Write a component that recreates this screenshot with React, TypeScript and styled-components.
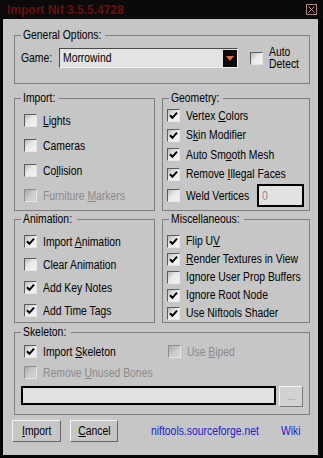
import React from 'react';
import styled, { createGlobalStyle } from 'styled-components';

const uiFont = `"Liberation Sans", Arial, sans-serif`;
// the dialog text is a narrow Arial; no narrow face is installed, so squeeze it
const SQUEEZE = 0.83;

const GlobalStyle = createGlobalStyle`
  html, body {
    margin: 0;
    padding: 0;
    background: #000;
  }
  body {
    width: 323px;
    height: 458px;
    overflow: hidden;
    font-family: ${uiFont};
    font-size: 12.5px;
    color: #000;
  }
`;

const Txt = styled.span<{ $center?: boolean }>`
  display: inline-block;
  white-space: nowrap;
  min-width: 0;
  transform: scaleX(${SQUEEZE});
  transform-origin: ${(p) => (p.$center ? '50% 50%' : '0 50%')};
`;

const Window = styled.div`
  width: 323px;
  height: 458px;
  display: flex;
  flex-direction: column;
  background: #050404;
`;

const TitleBar = styled.div`
  flex: none;
  height: 19px;
  display: flex;
  align-items: center;
  justify-content: space-between;
  padding: 0 6px 0 7px;
  background: #0b0909;
`;

const Title = styled.span`
  font: bold 12px 'Liberation Sans', Arial, sans-serif;
  color: #6c1010;
`;

const CloseBox = styled.div`
  width: 9px;
  height: 9px;
  border: 1px solid #a88585;
  display: flex;
  align-items: center;
  justify-content: center;
`;

const Body = styled.div`
  flex: 1;
  margin: 0 5px 3px 3px;
  padding: 9px 8px 0 11px;
  background: #c6c6c6;
  display: flex;
  flex-direction: column;
`;

const Group = styled.fieldset<{ $mt?: number }>`
  margin: ${(p) => p.$mt ?? 0}px 0 0 0;
  padding: 0;
  min-width: 0;
  border: 1px solid #7e7e7e;
`;

const Legend = styled.legend<{ $w: number }>`
  width: ${(p) => p.$w}px;
  box-sizing: border-box;
  margin-left: 6px;
  padding: 0 0 0 2px;
  line-height: 14px;
  font-size: 12.5px;
  overflow: visible;
  white-space: nowrap;
`;

const Content = styled.div<{ $h: number; $pt: number; $pl: number; $pr?: number }>`
  height: ${(p) => p.$h}px;
  box-sizing: border-box;
  padding: ${(p) => p.$pt}px ${(p) => p.$pr ?? 4}px 0 ${(p) => p.$pl}px;
`;

const Columns = styled.div`
  display: grid;
  grid-template-columns: 141px 148px;
  column-gap: 7px;
`;

const Row = styled.label<{ $h: number; $disabled?: boolean }>`
  height: ${(p) => p.$h}px;
  display: flex;
  align-items: center;
  gap: 6px;
  white-space: nowrap;
  overflow: hidden;
  color: ${(p) => (p.$disabled ? '#8a8a8a' : '#000')};
`;

const Box = styled.span<{ $disabled?: boolean }>`
  flex: none;
  width: 11px;
  height: 11px;
  border-top: 1px solid ${(p) => (p.$disabled ? '#8e8e8e' : '#5c5c5c')};
  border-left: 1px solid ${(p) => (p.$disabled ? '#8e8e8e' : '#5c5c5c')};
  border-bottom: 1px solid #e6e6e6;
  border-right: 1px solid #e6e6e6;
  background: ${(p) =>
    p.$disabled
      ? 'linear-gradient(135deg, #a9a9a9 0%, #cfcfcf 60%)'
      : 'linear-gradient(135deg, #b8b8b8 0%, #e9e9e9 45%, #f4f4f4 100%)'};
  display: flex;
  align-items: center;
  justify-content: center;
`;

const GameRow = styled.div`
  display: flex;
  align-items: center;
  height: 20px;
`;

const GameLabel = styled.span`
  width: 39px;
`;

const Combo = styled.div`
  width: 182px;
  height: 20px;
  box-sizing: border-box;
  border-top: 1px solid #4a4a4a;
  border-left: 1px solid #4a4a4a;
  border-bottom: 1px solid #f2f2f2;
  border-right: 1px solid #f2f2f2;
  background: #e3e3e3;
  display: flex;
  align-items: center;
  justify-content: space-between;
  padding: 0 0 0 3px;
`;

const DropButton = styled.div`
  width: 14px;
  height: 17px;
  background: #0a0a0a;
  display: flex;
  align-items: center;
  justify-content: center;
`;

const AutoDetect = styled.label`
  margin-left: 12px;
  display: flex;
  align-items: center;
  gap: 6px;
  line-height: 12px;
`;

const TwoLines = styled.span`
  display: flex;
  flex-direction: column;
`;

const NumberField = styled.div`
  flex: none;
  width: 47px;
  height: 23px;
  box-sizing: border-box;
  margin-left: auto;
  border: 2px solid #000;
  background: #e2e2e2;
  color: #8a8a8a;
  padding-left: 3px;
  display: flex;
  align-items: center;
`;

const SkeletonTop = styled.div`
  display: flex;
`;

const Cell = styled.div<{ $w?: number }>`
  width: ${(p) => (p.$w ? `${p.$w}px` : 'auto')};
`;

const FileRow = styled.div`
  display: flex;
  align-items: flex-start;
  gap: 3px;
  margin: 3px 0 0 -3px;
`;

const PathField = styled.div`
  width: 255px;
  height: 19px;
  box-sizing: border-box;
  border: 2px solid #000;
  background: #e2e2e2;
`;

const Browse = styled.div`
  width: 24px;
  height: 21px;
  box-sizing: border-box;
  border-top: 1px solid #f2f2f2;
  border-left: 1px solid #f2f2f2;
  border-bottom: 1px solid #7a7a7a;
  border-right: 1px solid #7a7a7a;
  background: #d2d2d2;
  color: #8a8a8a;
  font-size: 10px;
  display: flex;
  align-items: center;
  justify-content: center;
`;

const ButtonRow = styled.div`
  display: flex;
  align-items: center;
  margin: 5px 0 0 -2px;
  height: 22px;
`;

const Button = styled.button<{ $ml?: number }>`
  width: 50px;
  height: 22px;
  margin-left: ${(p) => p.$ml ?? 0}px;
  padding: 0;
  font-family: ${uiFont};
  font-size: 12.5px;
  color: #000;
  background: #c6c6c6;
  border-top: 1px solid #f4f4f4;
  border-left: 1px solid #f4f4f4;
  border-bottom: 1px solid #686868;
  border-right: 1px solid #686868;
`;

const Link = styled.span<{ $ml: string; $mr?: number }>`
  margin-left: ${(p) => p.$ml};
  margin-right: ${(p) => p.$mr ?? 0}px;
  color: #2020c8;
  white-space: nowrap;
`;

type OptionProps = {
  h: number;
  checked?: boolean;
  disabled?: boolean;
  children: React.ReactNode;
};

const Tick = () => (
  <svg width="9" height="9" viewBox="0 0 9 9">
    <path d="M1 4.2 L3.4 6.8 L8 1.6" stroke="#000" strokeWidth="2" fill="none" />
  </svg>
);

const Option = ({ h, checked, disabled, children }: OptionProps) => (
  <Row $h={h} $disabled={disabled}>
    <Box $disabled={disabled}>{checked && <Tick />}</Box>
    <Txt>{children}</Txt>
  </Row>
);

export default function App() {
  return (
    <>
      <GlobalStyle />
      <Window>
        <TitleBar>
          <Title>Import Nif 3.5.5.4728</Title>
          <CloseBox>
            <svg width="7" height="7" viewBox="0 0 7 7">
              <path d="M0.5 0.5 L6.5 6.5 M6.5 0.5 L0.5 6.5" stroke="#c09a9a" strokeWidth="1" />
            </svg>
          </CloseBox>
        </TitleBar>
        <Body>
          <Group>
            <Legend $w={84}>
              <Txt>General Options:</Txt>
            </Legend>
            <Content $h={41} $pt={6} $pl={6}>
              <GameRow>
                <GameLabel>
                  <Txt>Game:</Txt>
                </GameLabel>
                <Combo>
                  <Txt>Morrowind</Txt>
                  <DropButton>
                    <svg width="8" height="5" viewBox="0 0 8 5">
                      <path d="M0 0 L8 0 L4 5 Z" fill="#e8683c" />
                    </svg>
                  </DropButton>
                </Combo>
                <AutoDetect>
                  <Box />
                  <TwoLines>
                    <Txt>Auto</Txt>
                    <Txt>Detect</Txt>
                  </TwoLines>
                </AutoDetect>
              </GameRow>
            </Content>
          </Group>

          <Columns>
            <Group $mt={7}>
              <Legend $w={38}>
                <Txt>Import:</Txt>
              </Legend>
              <Content $h={105} $pt={3} $pl={9}>
                <Option h={25}>
                  <u>L</u>ights
                </Option>
                <Option h={25}>Cameras</Option>
                <Option h={25}>
                  Co<u>l</u>lision
                </Option>
                <Option h={25} disabled>
                  Furniture <u>M</u>arkers
                </Option>
              </Content>
            </Group>
            <Group $mt={7}>
              <Legend $w={54}>
                <Txt>Geometry:</Txt>
              </Legend>
              <Content $h={105} $pt={1} $pl={4} $pr={5}>
                <Option h={19.5} checked>
                  Vertex <u>C</u>olors
                </Option>
                <Option h={19.5} checked>
                  S<u>k</u>in Modifier
                </Option>
                <Option h={19.5} checked>
                  Auto Sm<u>o</u>oth Mesh
                </Option>
                <Option h={19.5} checked>
                  Remove <u>I</u>llegal Faces
                </Option>
                <Row $h={23}>
                  <Box />
                  <Txt>Weld Vertices</Txt>
                  <NumberField>
                    <Txt>0</Txt>
                  </NumberField>
                </Row>
              </Content>
            </Group>

            <Group $mt={1}>
              <Legend $w={56}>
                <Txt>Animation:</Txt>
              </Legend>
              <Content $h={96} $pt={4} $pl={9}>
                <Option h={23} checked>
                  Import <u>A</u>nimation
                </Option>
                <Option h={23}>Clear Animation</Option>
                <Option h={23} checked>
                  Add Key Notes
                </Option>
                <Option h={23} checked>
                  Add Time Tags
                </Option>
              </Content>
            </Group>
            <Group $mt={1}>
              <Legend $w={75}>
                <Txt>Miscellaneous:</Txt>
              </Legend>
              <Content $h={96} $pt={6} $pl={4} $pr={7}>
                <Option h={18} checked>
                  Flip U<u>V</u>
                </Option>
                <Option h={18} checked>
                  <u>R</u>ender Textures in View
                </Option>
                <Option h={18}>Ignore User Prop Buffers</Option>
                <Option h={18} checked>
                  Ignore Root Node
                </Option>
                <Option h={18} checked>
                  Use Niftools Shader
                </Option>
              </Content>
            </Group>
          </Columns>

          <Group $mt={2}>
            <Legend $w={50}>
              <Txt>Skeleton:</Txt>
            </Legend>
            <Content $h={75} $pt={2} $pl={9}>
              <SkeletonTop>
                <Cell $w={144}>
                  <Option h={21} checked>
                    Import <u>S</u>keleton
                  </Option>
                </Cell>
                <Cell>
                  <Option h={21} disabled>
                    Use <u>B</u>iped
                  </Option>
                </Cell>
              </SkeletonTop>
              <Option h={21} disabled>
                Remove <u>U</u>nused Bones
              </Option>
              <FileRow>
                <PathField />
                <Browse>...</Browse>
              </FileRow>
            </Content>
          </Group>

          <ButtonRow>
            <Button>
              <Txt $center>
                <u>I</u>mport
              </Txt>
            </Button>
            <Button $ml={9}>
              <Txt $center>
                <u>C</u>ancel
              </Txt>
            </Button>
            <Link $ml="33px">
              <Txt>niftools.sourceforge.net</Txt>
            </Link>
            <Link $ml="auto" $mr={5}>
              <Txt>Wiki</Txt>
            </Link>
          </ButtonRow>
        </Body>
      </Window>
    </>
  );
}
